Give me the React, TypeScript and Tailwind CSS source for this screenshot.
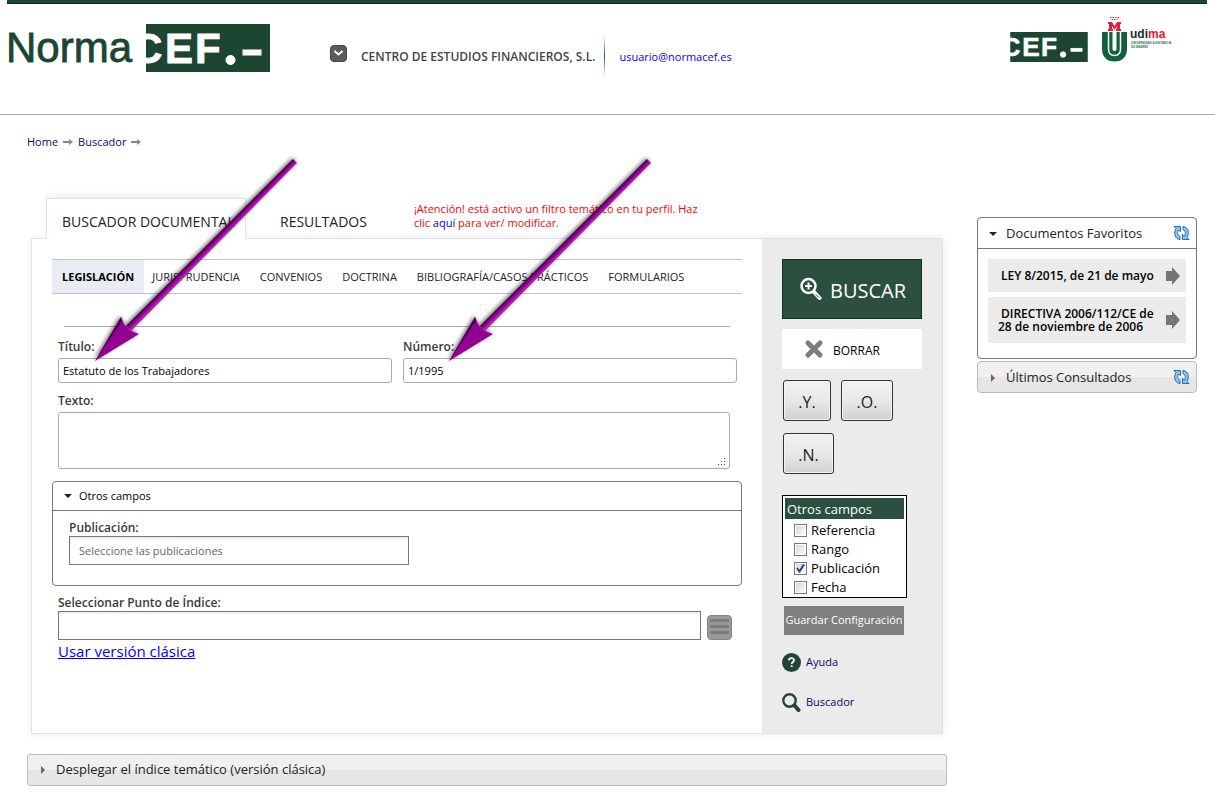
import React from "react";

const FONT = "font-['Open_Sans','Noto_Sans',sans-serif]";

const subjects = [
  "JURISPRUDENCIA",
  "CONVENIOS",
  "DOCTRINA",
  "BIBLIOGRAFÍA/CASOS PRÁCTICOS",
  "FORMULARIOS",
];

const extraFields = [
  { id: "referencia", label: "Referencia", checked: false },
  { id: "rango", label: "Rango", checked: false },
  { id: "publicacion", label: "Publicación", checked: true },
  { id: "fecha", label: "Fecha", checked: false },
];

const App = () => (
  <div className={`${FONT} min-h-screen bg-white text-xs text-[#222]`}>
    <Header />
    <main className="relative pt-[17px] pr-[18px] pb-[9px] pl-[27px]">
      <nav aria-label="Ruta" className="flex h-5 items-center gap-[5px] text-[11px] text-[#1a0068]">
        <a href="#home">Home</a>
        <CrumbArrow />
        <a href="#buscador">Buscador</a>
        <CrumbArrow />
      </nav>

      <div className="mt-[46px] flex items-start gap-[30px]">
        <div className="min-w-0 flex-1">
          <SearchPanel />
          <button
            type="button"
            className="mt-5 flex h-8 w-full items-center gap-2 rounded-[3px] border border-[#bcbcbc] bg-linear-to-b from-[#f0f0f0] from-50% to-[#e6e6e6] to-50% pl-[10px] text-left text-[13px]"
          >
            <Triangle />
            Desplegar el índice temático (versión clásica)
          </button>
        </div>
        <Favorites />
      </div>

      {/* pointers to the two filled-in fields */}
      <Pointer id="titulo" className="left-[90px]" />
      <Pointer id="numero" className="left-[444px]" />
    </main>
  </div>
);

export default App;

/* ---------- header ---------- */

const Header = () => (
  <header className="border-b border-[#aaa]">
    <div className="mr-2 ml-[7px] h-1 border-b border-[#0c2a1a] bg-[#1d4632]" />
    <div className="flex h-[110px] items-start pr-10 pl-[6px]">
      <a href="#inicio" aria-label="Norma CEF" className="mt-5 flex gap-[2px]">
        <svg width="138" height="48" viewBox="0 0 138 48">
          <text
            x="0"
            y="38"
            fontSize="42"
            fontFamily="Liberation Sans, Arial, sans-serif"
            fill="#1d4632"
            stroke="#1d4632"
            strokeWidth="0.8"
          >
            Norma
          </text>
        </svg>
        <CefLogo className="h-12 w-[124px]" />
      </a>

      <div className="mt-8 ml-[60px] flex h-10 items-center">
        <button
          type="button"
          aria-label="Abrir menú"
          className="mb-[6px] grid size-[17px] place-items-center rounded-[4px] border border-[#444] bg-[#5c5c5c]"
        >
          <svg width="11" height="8" viewBox="0 0 11 8" fill="none" stroke="#fff" strokeWidth="2">
            <path d="M1.5 2 5.5 5.5 9.5 2" />
          </svg>
        </button>
        <span className="ml-[14px] pt-[2px] text-xs font-semibold text-[#444]">CENTRO DE ESTUDIOS FINANCIEROS, S.L.</span>
        <span className="ml-[9px] h-10 w-px bg-linear-to-b from-transparent via-[#2a5a45] to-transparent" />
        <a href="mailto:usuario@normacef.es" className="ml-[14px] pt-[2px] text-[11px] text-[#00f]">
          usuario@normacef.es
        </a>
      </div>

      <div className="ml-auto flex items-end gap-[14px] pt-3">
        <CefLogo className="h-[30px] w-[78px]" />
        <UdimaLogo />
      </div>
    </div>
  </header>
);

const CefLogo = ({ className }: { className: string }) => (
  <svg className={className} viewBox="0 0 124 48" role="img" aria-label="CEF.-">
    <rect width="124" height="48" fill="#1d4632" />
    <g fill="#fff" stroke="#fff" fontFamily="Liberation Sans, Arial, sans-serif" fontWeight="700" fontSize="42">
      <text x="-14 19 49" y="39" strokeWidth="0.800">
        CEF
      </text>
      <circle cx="84.500" cy="36" r="4.500" />
      <rect x="97" y="26" width="18" height="5" />
    </g>
  </svg>
);

const UdimaLogo = () => (
  <svg width="73" height="46" viewBox="0 0 73 46" role="img" aria-label="udima, Universidad a Distancia de Madrid">
    <path d="M0 16h25v17c0 8-5 12.500-12.500 12.500S0 41 0 33z" fill="#12603e" />
    <path d="M6.500 15v18c0 4.500 2.500 6.500 6 6.500s6-2 6-6.500V15" fill="none" stroke="#fff" strokeWidth="1.500" />
    <path d="M10.500 15h4v18a2 2 0 0 1-4 0z" fill="#fff" />
    <path d="M6 15V13h1V8H6V6h4l2.500 4L15 6h4v2h-1v5h1v2h-5v-2h1v-3l-2.500 4L10 10v3h1v2z" fill="#e2203a" />
    <path d="M8 1.500h9M9.500 3.500h6" stroke="#e2203a" strokeWidth="1" strokeDasharray="1.500 1" />
    <text x="28" y="22" fontSize="12" fontWeight="700" fontFamily="Liberation Sans, Arial, sans-serif" fill="#1a2c25">
      udi<tspan fill="#e2203a">ma</tspan>
    </text>
    <g fontSize="3" fontWeight="700" fontFamily="Liberation Sans, Arial, sans-serif" fill="#2f7056">
      <text x="29" y="28">UNIVERSIDAD A DISTANCIA</text>
      <text x="29" y="32">DE MADRID</text>
    </g>
  </svg>
);

/* ---------- search panel ---------- */

const SearchPanel = () => (
  <div className="mx-1">
    <div className="ml-[15px] flex h-10 items-end">
      <button
        type="button"
        className="relative -mb-px h-[41px] w-[200px] border border-b-0 border-[#e4e4e4] bg-white px-[15px] pt-[6px] text-left text-sm whitespace-nowrap shadow-[0_-4px_6px_rgba(0,0,0,0.05)]"
      >
        BUSCADOR DOCUMENTAL
      </button>
      <button type="button" className="ml-[34px] h-10 pt-2 text-sm">
        RESULTADOS
      </button>
      <p className="mb-2 ml-[47px] w-[300px] text-[11px] leading-[14px] text-[#f00]">
        ¡Atención! está activo un filtro temático en tu perfil. Haz clic{" "}
        <a href="#perfil" className="text-[#00f]">
          aquí
        </a>{" "}
        para ver/ modificar.
      </p>
    </div>

    <div className="flex border border-[#e2e2e2] bg-white shadow-[0_0_8px_rgba(0,0,0,0.08)]">
      <SearchForm />
      <Sidebar />
    </div>
  </div>
);

const SearchForm = () => (
  <form className="min-w-0 flex-1 px-5 pt-5">
    <div className="flex h-[35px] items-stretch border-y border-[#c4c4c4] text-[11px] whitespace-nowrap">
      <button type="button" className="mr-2 bg-[#e9ecf2] px-[10px] pt-[2px] font-bold text-black">
        LEGISLACIÓN
      </button>
      <div className="flex gap-5">
        {subjects.map((s) => (
          <button key={s} type="button" className="pt-[2px]">
            {s}
          </button>
        ))}
      </div>
    </div>

    <hr className="mx-3 mt-8 border-[#aaa]" />

    <div className="mt-3 mr-[5px] ml-[6px] flex gap-[11px]">
      <TextField id="titulo-campo" label="Título:" value="Estatuto de los Trabajadores" />
      <TextField id="numero-campo" label="Número:" value="1/1995" />
    </div>

    <div className="mt-[10px] mr-3 ml-[6px]">
      <Label htmlFor="texto">Texto:</Label>
      <div className="relative mt-[3px] h-[57px]">
        <textarea id="texto" className="block h-full w-full resize-none rounded-[3px] border border-[#aaa] px-1" />
        <svg className="absolute right-1 bottom-[3px]" width="8" height="8" fill="#555">
          <path d="M6 0h1v1H6zM3 3h1v1H3zM6 3h1v1H6zM0 6h1v1H0zM3 6h1v1H3zM6 6h1v1H6z" />
        </svg>
      </div>
    </div>

    <section className="mt-3 rounded-[4px] border border-[#777]">
      <button
        type="button"
        className="flex h-[29px] w-full items-center gap-[6px] border-b border-[#777] pl-[10px] text-[11px] text-black"
      >
        <Triangle open />
        Otros campos
      </button>
      <div className="px-4 pt-[9px] pb-5">
        <Label htmlFor="publicaciones">Publicación:</Label>
        <input
          id="publicaciones"
          placeholder="Seleccione las publicaciones"
          className="block h-[29px] w-[340px] border border-[#777] px-[9px] text-[11px] shadow-[inset_0_2px_2px_#eee] placeholder:text-[#666]"
        />
      </div>
    </section>

    <div className="mt-[9px] mr-[10px] ml-[6px]">
      <Label htmlFor="indice">Seleccionar Punto de Índice:</Label>
      <div className="flex items-end gap-[6px]">
        <input
          id="indice"
          className="h-[29px] min-w-0 flex-1 border border-[#777] px-1 text-[11px] shadow-[inset_0_2px_2px_#eee]"
        />
        <button
          type="button"
          aria-label="Abrir índice"
          className="flex size-[25px] flex-col gap-[3px] rounded-[4px] border border-[#858585] bg-[#999] px-[2px] pt-[3px]"
        >
          <span className="h-[3px] w-full bg-[#7c7c7c]" />
          <span className="h-[3px] w-full bg-[#7c7c7c]" />
          <span className="h-[3px] w-full bg-[#7c7c7c]" />
        </button>
      </div>
      <a href="#clasica" className="mt-px inline-block text-[15px] leading-5 text-[#00f] underline">
        Usar versión clásica
      </a>
    </div>
  </form>
);

const Label = ({ htmlFor, children }: { htmlFor: string; children: React.ReactNode }) => (
  <label htmlFor={htmlFor} className="block text-xs leading-4 font-semibold text-[#3a3a3a]">
    {children}
  </label>
);

const TextField = ({ id, label, value }: { id: string; label: string; value: string }) => (
  <div className="flex min-w-0 flex-1 flex-col gap-[3px]">
    <Label htmlFor={id}>{label}</Label>
    <input
      id={id}
      defaultValue={value}
      className="h-[25px] w-full rounded-[3px] border border-[#aaa] px-1 text-[11px] text-black"
    />
  </div>
);

const Sidebar = () => (
  <div className="w-[180px] bg-[#ebebeb] px-5 pt-5 pb-[21px]">
    <button
      type="button"
      className="flex h-[60px] w-[140px] items-center gap-2 border border-[#0f3522] bg-[#2c5040] pl-[17px] text-xl text-white"
    >
      <svg width="22" height="24" viewBox="0 0 22 24" fill="none" stroke="#fff">
        <circle cx="8.500" cy="9" r="7" strokeWidth="2.500" />
        <path d="M8.500 5.500v7M5 9h7" strokeWidth="2" />
        <path d="m14 15 5.500 6" strokeWidth="4" strokeLinecap="round" />
        <path d="m16 17.500 3 3.200" stroke="#2c5040" strokeWidth="1" />
      </svg>
      <span className="pt-1">BUSCAR</span>
    </button>
    <button type="button" className="mt-[10px] flex h-10 w-[140px] items-center gap-[9px] bg-white pl-[22px] text-black">
      <svg width="20" height="20" viewBox="0 0 20 20" stroke="#7d7d7d" strokeWidth="5" strokeLinecap="round">
        <path d="m4 4 12 12M16 4 4 16" />
      </svg>
      <span className="pt-1">BORRAR</span>
    </button>

    <div className="mt-[11px] ml-px flex flex-wrap gap-x-[10px] gap-y-3 text-base">
      <Operator className="w-12">.Y.</Operator>
      <Operator className="w-[52px]">.O.</Operator>
      <Operator className="w-[51px]">.N.</Operator>
    </div>

    <fieldset className="mt-[21px] h-[103px] w-[125px] border border-black bg-white p-[2px] text-[13px] leading-[19px] text-black">
      <div className="mb-[2px] h-[21px] bg-[#2c5040] pl-[2px] leading-[22px] text-white">Otros campos</div>
      {extraFields.map((f) => (
        <label key={f.id} htmlFor={f.id} className="relative flex items-center gap-1 pl-[9px]">
          <input
            id={f.id}
            type="checkbox"
            defaultChecked={f.checked}
            className="peer size-[13px] appearance-none border border-[#777] bg-linear-to-br from-[#cfd3d8] to-white shadow-[inset_0_0_0_1px_#fff]"
          />
          <svg
            className="absolute left-[11px] hidden peer-checked:block"
            width="9"
            height="9"
            viewBox="0 0 9 9"
            fill="none"
            stroke="#2b3f8c"
            strokeWidth="2"
          >
            <path d="m1 4 2.500 3.500L8 .500" />
          </svg>
          {f.label}
        </label>
      ))}
    </fieldset>

    <button type="button" className="mt-2 ml-[2px] block h-[29px] w-[120px] bg-[#808080] text-[11px] whitespace-nowrap text-white">
      Guardar Configuración
    </button>

    <a href="#ayuda" className="mt-[17px] flex h-5 items-center gap-[5px] text-[11px] text-[#1a0068]">
      <svg width="19" height="19" viewBox="0 0 19 19">
        <circle cx="9.500" cy="9.500" r="9.500" fill="#1f4635" />
        <path
          d="M7 7.500C7 4.500 12 4.500 12 7.300c0 1.700-2.300 1.700-2.300 3.600M9.700 12.200v1.900"
          fill="none"
          stroke="#fff"
          strokeWidth="1.800"
        />
      </svg>
      Ayuda
    </a>
    <a href="#buscador" className="mt-5 flex h-5 items-center gap-[5px] text-[11px] text-[#1a0068]">
      <svg width="19" height="19" viewBox="0 0 19 19" fill="none" stroke="#1f4635">
        <circle cx="7.500" cy="7.500" r="6.200" strokeWidth="2.400" />
        <path d="m12.500 12.500 4 4.500" strokeWidth="4" strokeLinecap="round" />
      </svg>
      Buscador
    </a>
  </div>
);

const Operator = ({ className, children }: { className: string; children: React.ReactNode }) => (
  <button
    type="button"
    className={`${className} h-[41px] rounded-[3px] border border-[#333] bg-linear-to-b from-[#f1f1f1] via-[#e9e9e9] via-50% to-[#d0d0d0] pt-[2px] shadow-[inset_0_0_0_1px_#f5f5f5]`}
  >
    {children}
  </button>
);

/* ---------- right column ---------- */

const Favorites = () => (
  <aside className="w-[220px] shrink-0 pt-[19px] text-[13px]">
    <section className="rounded-[4px] border border-[#777]">
      <PanelTitle open>Documentos Favoritos</PanelTitle>
      <ul className="flex flex-col gap-[5px] border-t border-[#777] px-[10px] pt-[10px] pb-[15px] text-xs leading-[13px] font-semibold text-black">
        <Favorite className="h-[33px]">LEY 8/2015, de 21 de mayo</Favorite>
        <Favorite className="h-[46px]">DIRECTIVA 2006/112/CE de 28 de noviembre de 2006</Favorite>
      </ul>
    </section>
    <section className="mt-[2px] rounded-[4px] border border-[#bcbcbc] bg-linear-to-b from-[#f0f0f0] from-50% to-[#e6e6e6] to-50%">
      <PanelTitle>Últimos Consultados</PanelTitle>
    </section>
  </aside>
);

const PanelTitle = ({ open, children }: { open?: boolean; children: React.ReactNode }) => (
  <div className="flex h-[30px] items-center pr-[6px] pl-[10px]">
    <button type="button" className="flex flex-1 items-center gap-2 pt-[2px] text-left">
      <Triangle open={open} />
      {children}
    </button>
    <button type="button" aria-label="Actualizar">
      <RefreshIcon />
    </button>
  </div>
);

const Favorite = ({ className, children }: { className: string; children: React.ReactNode }) => (
  <li className={`${className} flex items-center bg-[#ebebeb] pr-[6px] pl-[10px]`}>
    <a href="#documento" className="flex-1 indent-[3px]">
      {children}
    </a>
    <svg width="14" height="18" viewBox="0 0 14 18" fill="#757575">
      <path d="M0 4h6V0l8 9-8 9v-4H0z" />
    </svg>
  </li>
);

/* ---------- small drawings ---------- */

const Triangle = ({ open }: { open?: boolean }) => (
  <svg width="10" height="8" viewBox="0 0 10 8" className="shrink-0">
    {open ? <path d="M1 2h8L5 6z" fill="#222" /> : <path d="M3 0v8l4-4z" fill="#666" />}
  </svg>
);

const CrumbArrow = () => (
  <svg width="10" height="6" viewBox="0 0 10 6" fill="#888">
    <path d="M0 2h6V0l4 3-4 3V4H0z" />
  </svg>
);

const RefreshIcon = () => (
  <svg width="17" height="16" viewBox="0 0 17 16" fill="#8cc6ee" stroke="#1f6cae" strokeWidth="1">
    <path d="M1 1.500h6.500v5L5.500 5C4 7.500 4.500 10 7 11.500v3.200C1.500 13.500.500 8 3 3.500z" />
    <path d="M16 14.500H9.500v-5l2 1.500c1.500-2.500 1-5-1.500-6.500V1.300c5.500 1.200 6.500 6.700 4 11.200z" />
  </svg>
);

const Pointer = ({ id, className }: { id: string; className: string }) => (
  <svg
    className={`${className} pointer-events-none absolute top-10 z-20 drop-shadow-[-1px_-1px_2px_rgba(0,0,0,0.6)]`}
    width="212"
    height="212"
    viewBox="0 0 212 212"
    aria-hidden="true"
  >
    <defs>
      <linearGradient id={`shaft-${id}`} gradientUnits="userSpaceOnUse" x1="119" y1="88" x2="123" y2="92">
        <stop offset="0" stopColor="#3d0040" />
        <stop offset="0.500" stopColor="#900090" />
        <stop offset="1" stopColor="#a828a8" />
      </linearGradient>
    </defs>
    <path d="M203 4 207 8 41 176 36 171z" fill={`url(#shaft-${id})`} />
    <path d="M5 206 31 162 35 171 41 176 49 179z" fill="#940094" />
    <path d="M5 206 31 162 32 166z" fill="#4a0050" />
  </svg>
);
